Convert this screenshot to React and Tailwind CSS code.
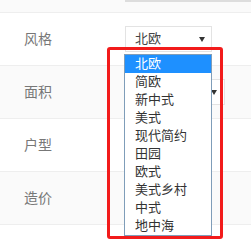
import React from 'react';

const styles = ['北欧', '简欧', '新中式', '美式', '现代简约', '田园', '欧式', '美式乡村', '中式', '地中海'];

const Arrow = ({ className }) => (
  <svg width="6" height="5" viewBox="0 0 6 5" className={className}>
    <polygon points="0,0 6,0 3,5" fill="#333" />
  </svg>
);

const Row = ({ label, grey, children }) => (
  <div className={`flex h-[53px] items-center border-t border-[#eeeeee] ${grey ? 'bg-[#fafafa]' : 'bg-white'}`}>
    <div className="w-[125px] pl-[24px] text-[14px] text-[#777]">{label}</div>
    {children}
  </div>
);

const App = () => {
  return (
    <div
      className="relative h-[241px] w-[251px] overflow-hidden bg-white"
      style={{ fontFamily: '"Liberation Sans", "Noto Sans CJK SC", sans-serif' }}
    >
      {/* previous row tail */}
      <div className="h-[12px] bg-[#fafafa]">
        <div className="ml-[125px] h-[2px] bg-[#dddddd]" />
      </div>

      <Row label="风格">
        <div className="flex h-[26px] w-[87px] items-center justify-between border border-[#e3e3e3] bg-white pl-[9px] pr-[6px] text-[13px] text-[#444]">
          <span>北欧</span>
          <Arrow />
        </div>
      </Row>
      <Row label="面积" grey>
        <div className="flex h-[26px] w-[100px] items-center justify-end border border-[#e3e3e3] bg-white pr-[7px]">
          <Arrow />
        </div>
      </Row>
      <Row label="户型" />
      <Row label="造价" grey />
      <div className="h-[20px] border-t border-[#eeeeee] bg-white" />

      {/* open dropdown */}
      <div className="absolute left-[124px] top-[54px] w-[88px] border border-[#7f9db9] bg-white">
        {styles.map((s, i) => (
          <div
            key={s}
            className={`flex h-[18px] items-center pl-[10px] text-[13px] ${i === 0 ? 'bg-[#1e90ff] text-white' : 'text-[#333]'}`}
          >
            {s}
          </div>
        ))}
      </div>

      {/* red annotation box */}
      <div className="absolute left-[107px] top-[47px] h-[192px] w-[116px] rounded-[3px] border-[3px] border-[#f21b1b]" />
    </div>
  );
};

export default App;
